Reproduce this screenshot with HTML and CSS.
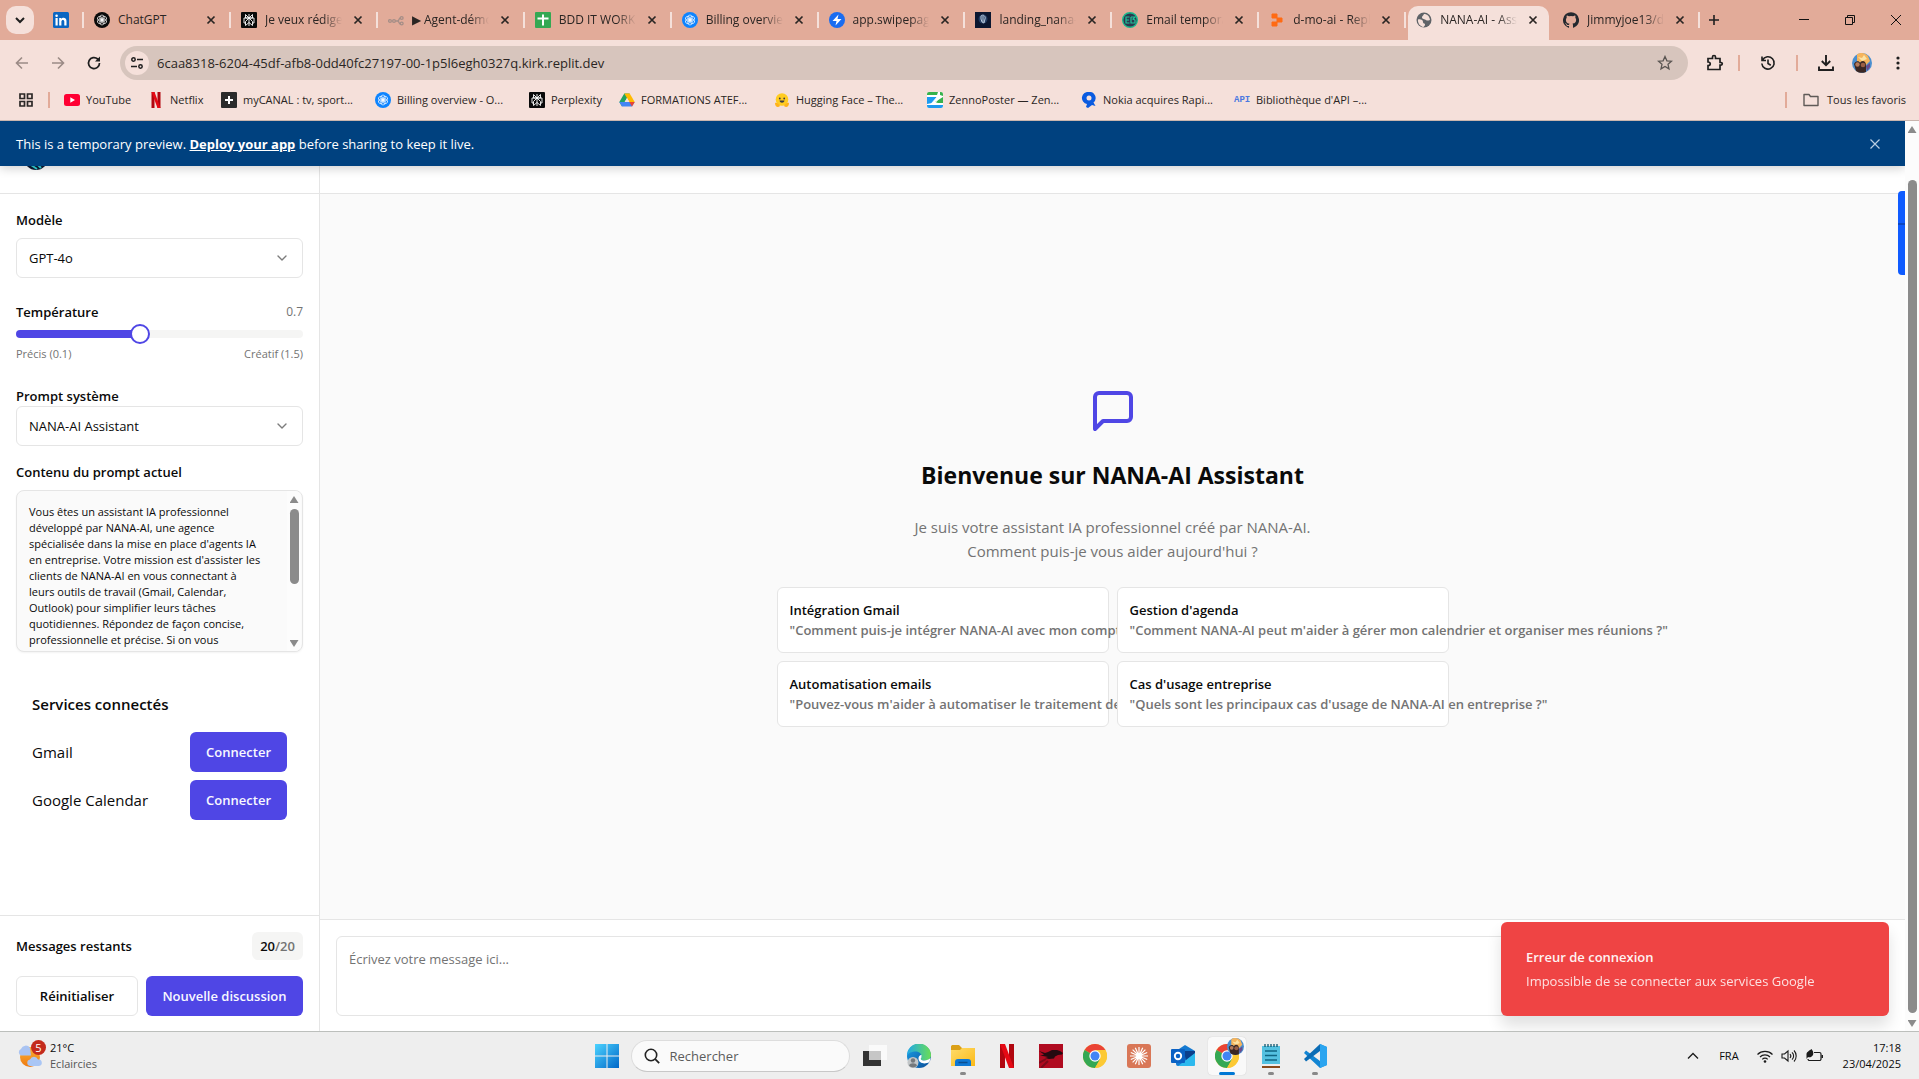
FILE: index.html
```html
<!DOCTYPE html>
<html lang="fr">
<head>
<meta charset="utf-8">
<title>NANA-AI - Assistant</title>
<link rel="stylesheet" href="styles.css">
</head>
<body>
<svg class="defs" aria-hidden="true">
  <defs>
    <symbol id="i-x" viewBox="0 0 16 16"><path d="M4.5 4.500l7 7M11.500 4.500l-7 7" fill="none" stroke="currentColor" stroke-width="1.700"/></symbol>
    <symbol id="i-openai" viewBox="0 0 16 16"><g fill="none" stroke="#fff" stroke-width=".7"><ellipse cx="8" cy="5.800" rx="2.200" ry="2.800"/><ellipse cx="8" cy="5.800" rx="2.200" ry="2.800" transform="rotate(60 8 8)"/><ellipse cx="8" cy="5.800" rx="2.200" ry="2.800" transform="rotate(120 8 8)"/><ellipse cx="8" cy="5.800" rx="2.200" ry="2.800" transform="rotate(180 8 8)"/><ellipse cx="8" cy="5.800" rx="2.200" ry="2.800" transform="rotate(240 8 8)"/><ellipse cx="8" cy="5.800" rx="2.200" ry="2.800" transform="rotate(300 8 8)"/></g></symbol>
    <symbol id="i-gpt" viewBox="0 0 16 16"><circle cx="8" cy="8" r="8" fill="#0a0a0a"/><use href="#i-openai"/></symbol>
    <symbol id="i-billing" viewBox="0 0 16 16"><circle cx="8" cy="8" r="8" fill="#0d84ff"/><use href="#i-openai"/></symbol>
    <symbol id="i-perp" viewBox="0 0 16 16"><rect width="16" height="16" rx="1" fill="#0a0a0a"/><path d="M8 2v12M4.500 2.500L8 6l3.500-3.500V6h-7zM3 6h10v5h-1.500M3 6v5h1.500M8 6l-3.500 3.500v4L8 10.500M8 6l3.500 3.500v4L8 10.500" fill="none" stroke="#fff" stroke-width=".9"/></symbol>
    <symbol id="i-chrome" viewBox="0 0 24 24"><circle cx="12" cy="12" r="12" fill="#fcc934"/><path d="M12 12L1.600 6A12 12 0 0 1 22.400 6z" fill="#ea4335"/><path d="M12 12L1.600 6A12 12 0 0 0 12 24l5.200-9z" fill="#34a853"/><path d="M12 6h10.400A12 12 0 0 1 12 24l5.200-9z" fill="#fcc934"/><circle cx="12" cy="12" r="5.700" fill="#fff"/><circle cx="12" cy="12" r="4.500" fill="#4285f4"/></symbol>
    <symbol id="i-avatar" viewBox="0 0 20 20"><circle cx="10" cy="10" r="10" fill="#4a8fd0"/><path d="M5 1.500c4-3 9-1 11 1.500l2 5-4 4-9-4z" fill="#f5b45c"/><path d="M6 4l4 1 2-3 3 4-5 2z" fill="#fbe3a5"/><path d="M2 11c1-3 5-4 6-1 1-3 6-3 6 2v7c-4 1.500-7 1-10-1z" fill="#3a2724"/><circle cx="5.500" cy="11.500" r="2.200" fill="#b37a5c"/><circle cx="11" cy="12" r="2.300" fill="#9a5f45"/><path d="M14 13l4-3v4l-3 4z" fill="#6a4a8a"/></symbol>
    <symbol id="i-chev" viewBox="0 0 16 16"><path d="M4 6l4 4 4-4" fill="none" stroke="currentColor" stroke-width="1.400" stroke-linecap="round" stroke-linejoin="round"/></symbol>
    <linearGradient id="g-win" x1="0" y1="0" x2="1" y2="1"><stop offset="0" stop-color="#4cd3ff"/><stop offset="1" stop-color="#0067c8"/></linearGradient>
    <linearGradient id="g-edge" x1="0" y1="0" x2="1" y2="0"><stop offset="0" stop-color="#1fa7e8"/><stop offset="1" stop-color="#6ade55"/></linearGradient>
    <linearGradient id="g-edge2" x1="0" y1="0" x2="1" y2="1"><stop offset="0" stop-color="#1aa0e8"/><stop offset="1" stop-color="#0a4d98"/></linearGradient>
    <linearGradient id="g-sun" x1="0" y1="0" x2="0" y2="1"><stop offset="0" stop-color="#fbb034"/><stop offset="1" stop-color="#ee7a12"/></linearGradient>
    <linearGradient id="g-folder" x1="0" y1="0" x2="1" y2="1"><stop offset="0" stop-color="#ffdc6b"/><stop offset="1" stop-color="#fbb917"/></linearGradient>
  </defs>
</svg>

<header class="browser">
  <div class="tabstrip">
    <button class="tab-search" aria-label="Rechercher dans les onglets"><svg width="16" height="16" viewBox="0 0 16 16"><path d="M4 6l4 4 4-4" fill="none" stroke="#1f1f1f" stroke-width="2"/></svg></button>
    <button class="tab pinned" aria-label="LinkedIn"><svg class="fav" viewBox="0 0 16 16"><rect width="16" height="16" rx="1.500" fill="#0a66c2"/><path d="M2.500 6h2.200v7.500H2.500zM6.200 6h2.100v1c1-1.700 5.200-1.800 5.200 2v4.500h-2.200V9.500c0-2.200-2.900-2-2.900 0v4H6.200z" fill="#fff"/><circle cx="3.600" cy="3.700" r="1.300" fill="#fff"/></svg></button>
    <nav class="tabs">
      <div class="tab"><svg class="fav"><use href="#i-gpt"/></svg><span class="tab-title">ChatGPT</span><button class="tab-close" aria-label="Fermer"><svg><use href="#i-x"/></svg></button></div>
      <div class="tab"><svg class="fav"><use href="#i-perp"/></svg><span class="tab-title">Je veux rédiger</span><button class="tab-close" aria-label="Fermer"><svg><use href="#i-x"/></svg></button></div>
      <div class="tab"><svg class="fav" viewBox="0 0 16 16"><g fill="none" stroke="#a58e87" stroke-width="1.300"><circle cx="2" cy="9" r="1.400"/><circle cx="6" cy="9" r="1.400"/><path d="M7.500 9h2c2 0 1-3 3-3M9.500 9c2 0 1 3 3 3"/><circle cx="13.700" cy="6" r="1.400"/><circle cx="13.700" cy="11.500" r="1.400"/></g></svg><span class="tab-title">▶ Agent-démo</span><button class="tab-close" aria-label="Fermer"><svg><use href="#i-x"/></svg></button></div>
      <div class="tab"><svg class="fav" viewBox="0 0 16 16"><rect width="16" height="16" rx="1" fill="#34a853"/><path d="M7 2.500h2v3h4.500v2H9v6H7v-6H2.500v-2H7z" fill="#fff"/></svg><span class="tab-title">BDD IT WORK</span><button class="tab-close" aria-label="Fermer"><svg><use href="#i-x"/></svg></button></div>
      <div class="tab"><svg class="fav"><use href="#i-billing"/></svg><span class="tab-title">Billing overview</span><button class="tab-close" aria-label="Fermer"><svg><use href="#i-x"/></svg></button></div>
      <div class="tab"><svg class="fav" viewBox="0 0 16 16"><circle cx="8" cy="8" r="8" fill="#1a6cf0"/><path d="M9.500 2.500L3.500 9H7.500L6.500 13.500 12.500 7H8.500z" fill="#fff"/></svg><span class="tab-title">app.swipepages</span><button class="tab-close" aria-label="Fermer"><svg><use href="#i-x"/></svg></button></div>
      <div class="tab"><svg class="fav" viewBox="0 0 16 16"><rect width="16" height="16" fill="#0b1630"/><circle cx="8" cy="7" r="4.500" fill="#253d63"/><path d="M6 4c2-2 5 0 4 3l-1 4-2-1-1-3zM8 4v6" fill="none" stroke="#b9cbdf" stroke-width="1"/></svg><span class="tab-title">landing_nana-ai</span><button class="tab-close" aria-label="Fermer"><svg><use href="#i-x"/></svg></button></div>
      <div class="tab"><svg class="fav" viewBox="0 0 16 16"><circle cx="8" cy="8" r="7.300" fill="#2b3950" stroke="#18b98c" stroke-width="1.400"/><path d="M7.500 5H4v6h3.500M4 8h3M9 5v6h4V8l-2-1 2-2H9" fill="none" stroke="#1fc79a" stroke-width="1.200"/></svg><span class="tab-title">Email temporaire</span><button class="tab-close" aria-label="Fermer"><svg><use href="#i-x"/></svg></button></div>
      <div class="tab"><svg class="fav" viewBox="0 0 16 16"><path d="M3 2h5v4H3zM8 6h5v4H8zM3 10h5v4H3z" fill="#ff6a13" stroke="#ff6a13" stroke-linejoin="round"/></svg><span class="tab-title">d-mo-ai - Replit</span><button class="tab-close" aria-label="Fermer"><svg><use href="#i-x"/></svg></button></div>
      <div class="tab active"><svg class="fav" viewBox="0 0 16 16"><circle cx="8" cy="8" r="7.500" fill="#5f6368"/><path d="M2 7.500c3-.5 5 .5 5 2.500s2 1 2 2.500-1 1.500-1.500 2.500C4 14.500 1.500 11 2 7.500zM8 2c-1 2-2 2-2 3.500S9 7 10 8s2 .5 4 0c-.5-4-3-6-6-6z" fill="#f5e0da"/></svg><span class="tab-title">NANA-AI - Assistant</span><button class="tab-close" aria-label="Fermer"><svg><use href="#i-x"/></svg></button></div>
      <div class="tab last"><svg class="fav" viewBox="0 0 16 16"><path d="M8 .2a8 8 0 0 0-2.530 15.590c.4.070.55-.17.550-.38v-1.490c-2.230.48-2.700-.94-2.700-.94-.36-.93-.89-1.170-.89-1.170-.73-.5.060-.49.060-.49.800.060 1.230.830 1.230.830.710 1.230 1.870.870 2.330.670.070-.520.280-.870.510-1.070-1.780-.2-3.640-.89-3.640-3.950 0-.87.310-1.590.820-2.150-.080-.2-.360-1.020.080-2.120 0 0 .670-.210 2.200.820a7.600 7.600 0 0 1 4 0c1.530-1.040 2.200-.820 2.200-.820.440 1.100.160 1.920.080 2.120.510.560.820 1.270.820 2.150 0 3.070-1.870 3.750-3.650 3.950.290.250.540.730.540 1.480v2.190c0 .210.150.460.550.380A8 8 0 0 0 8 .2z" fill="#24292f"/></svg><span class="tab-title">Jimmyjoe13/dmo</span><button class="tab-close" aria-label="Fermer"><svg><use href="#i-x"/></svg></button></div>
    </nav>
    <button class="new-tab" aria-label="Nouvel onglet"><svg width="16" height="16" viewBox="0 0 16 16"><path d="M8 3v10M3 8h10" stroke="#1f1f1f" stroke-width="1.600"/></svg></button>
    <div class="window-controls">
      <button aria-label="Réduire"><svg width="12" height="12" viewBox="0 0 12 12"><path d="M1 5.500h10" stroke="#111"/></svg></button>
      <button aria-label="Restaurer"><svg width="12" height="12" viewBox="0 0 12 12"><path d="M1.500 3.500h7v7h-7zM3.500 3V1.500h7v7H9" fill="none" stroke="#111"/></svg></button>
      <button aria-label="Fermer la fenêtre"><svg width="12" height="12" viewBox="0 0 12 12"><path d="M1 1l10 10M11 1L1 11" stroke="#111"/></svg></button>
    </div>
  </div>

  <div class="toolbar">
    <button class="tool" aria-label="Retour"><svg width="16" height="16" viewBox="0 0 16 16"><path d="M14 8H3M8 2.500L2.500 8 8 13.500" fill="none" stroke="#9b8b86" stroke-width="1.600"/></svg></button>
    <button class="tool" aria-label="Avancer"><svg width="16" height="16" viewBox="0 0 16 16"><path d="M2 8h11M8 2.500L13.500 8 8 13.500" fill="none" stroke="#9b8b86" stroke-width="1.600"/></svg></button>
    <button class="tool" aria-label="Actualiser"><svg width="16" height="16" viewBox="0 0 16 16"><path d="M13.500 8A5.500 5.500 0 1 1 11.700 4L13 5.200" fill="none" stroke="#1f1f1f" stroke-width="1.700"/><path d="M14 1.500V6.500H9z" fill="#1f1f1f"/></svg></button>
    <div class="omnibox">
      <button class="site-info" aria-label="Informations sur le site"><svg width="14" height="14" viewBox="0 0 14 14"><g fill="none" stroke="#1f1f1f" stroke-width="1.500"><circle cx="3.500" cy="3.500" r="1.700"/><path d="M7 3.500h6M1 10.500h6"/><circle cx="10.500" cy="10.500" r="1.700"/></g></svg></button>
      <input class="url" type="text" aria-label="Adresse" value="6caa8318-6204-45df-afb8-0dd40fc27197-00-1p5l6egh0327q.kirk.replit.dev">
      <button class="star" aria-label="Ajouter aux favoris"><svg width="16" height="16" viewBox="0 0 16 16"><path d="M8 1.500l1.900 4.300 4.600.4-3.500 3.100 1 4.600L8 11.500l-4 2.400 1-4.600L1.500 6.200l4.600-.4z" fill="none" stroke="#5a5552" stroke-width="1.300"/></svg></button>
    </div>
    <button class="tool ext" aria-label="Extensions"><svg width="18" height="18" viewBox="0 0 18 18"><path d="M2 4.500h4.500V3a1.500 1.500 0 0 1 3 0v1.500H14V8.500h1a1.300 1.300 0 0 1 0 2.600h-1V15.500H2v-4c3 0 3-3.500 0-3.500z" fill="none" stroke="#1f1f1f" stroke-width="1.700"/></svg></button>
    <span class="sep"></span>
    <button class="tool" aria-label="Historique"><svg width="16" height="16" viewBox="0 0 16 16"><path d="M2.500 5A6.200 6.200 0 1 1 1.800 8.500M2 1.500V5.500H6M8 4.500V8.500l2.800 1.700" fill="none" stroke="#1f1f1f" stroke-width="1.600"/></svg></button>
    <span class="sep"></span>
    <button class="tool" aria-label="Téléchargements"><svg width="18" height="18" viewBox="0 0 18 18"><path d="M9 1v10M4.800 7L9 11.200 13.200 7M2 12.500V16h14v-3.500" fill="none" stroke="#1f1f1f" stroke-width="1.900"/></svg></button>
    <button class="tool" aria-label="Profil"><svg width="20" height="20"><use href="#i-avatar"/></svg></button>
    <button class="tool" aria-label="Menu"><svg width="16" height="16" viewBox="0 0 16 16"><g fill="#1f1f1f"><circle cx="8" cy="3" r="1.600"/><circle cx="8" cy="8" r="1.600"/><circle cx="8" cy="13" r="1.600"/></g></svg></button>
  </div>

  <div class="bookmarks">
    <button class="apps" aria-label="Applications"><svg width="16" height="16" viewBox="0 0 16 16"><path d="M2 2h4.500v4.500H2zM9.500 2H14v4.500H9.500zM2 9.500h4.500V14H2zM9.500 9.500H14V14H9.500z" fill="none" stroke="#2b2726" stroke-width="1.700"/></svg></button>
    <span class="sep"></span>
    <nav class="bookmark-list">
      <a href="#"><svg class="fav" viewBox="0 0 16 16"><rect y="2" width="16" height="12" rx="2.500" fill="#ff0033"/><path d="M6.300 5.300L11 8l-4.700 2.700z" fill="#fff"/></svg>YouTube</a>
      <a href="#"><svg class="fav" viewBox="0 0 16 16"><path d="M3.500 0h3v16h-3zM9.500 0h3v16h-3z" fill="#b1060f"/><path d="M3.500 0h3l6 16h-3z" fill="#e50914"/></svg>Netflix</a>
      <a href="#"><svg class="fav" viewBox="0 0 16 16"><rect width="16" height="16" rx="1" fill="#2b2b2b"/><path d="M7 4h2v3h3v2H9v3H7V9H4V7h3z" fill="#fff"/></svg>myCANAL : tv, sport...</a>
      <a href="#"><svg class="fav"><use href="#i-billing"/></svg>Billing overview - O...</a>
      <a href="#"><svg class="fav"><use href="#i-perp"/></svg>Perplexity</a>
      <a href="#"><svg class="fav" viewBox="0 0 16 16"><path d="M5.300 1.500h5.400L8 6 3 14.500.3 10z" fill="#1ea362"/><path d="M5.300 1.500h5.400L15.700 10h-5.400z" fill="#ffba00"/><path d="M.3 10h15.400L13 14.500H3z" fill="#4285f4"/><path d="M15.700 10L13 14.500 10.300 10z" fill="#ea4335"/><path d="M8 6l2.300 4H5.700z" fill="#f5e0da"/></svg>FORMATIONS ATEF...</a>
      <a href="#"><svg class="fav" viewBox="0 0 16 16"><circle cx="8" cy="7.500" r="6.300" fill="#ffcc22"/><path d="M1 11c2-1 4 1 5 3-2 2-5 1-5-3zM15 11c-2-1-4 1-5 3 2 2 5 1 5-3z" fill="#ffb31a"/><circle cx="5.800" cy="6.500" r=".9" fill="#3a3b45"/><circle cx="10.200" cy="6.500" r=".9" fill="#3a3b45"/><path d="M5.500 8.500h5c-.5 3-4.500 3-5 0z" fill="#3a3b45"/></svg>Hugging Face – The...</a>
      <a href="#"><svg class="fav" viewBox="0 0 16 16"><rect width="16" height="16" rx="2" fill="#fff"/><path d="M2 0h9l-1 3H0V2a2 2 0 0 1 2-2zM13 0h1a2 2 0 0 1 2 2v2l-3-1zM16 5v6h-5L8 10z" fill="#37b24d"/><path d="M0 5h10L5 11l-5 1zM0 13h16v1a2 2 0 0 1-2 2H2a2 2 0 0 1-2-2z" fill="#1c9bf0"/><path d="M11 4L4 12M13 5l-6 7" stroke="#fff"/></svg>ZennoPoster — Zen...</a>
      <a href="#"><svg class="fav" viewBox="0 0 16 16"><path d="M8 0a6 6 0 0 1 4.500 10.500L14.500 14 11 13 7 16 5 15 6 12A6 6 0 0 1 8 0z" fill="#0a5be0"/><circle cx="8" cy="6" r="2.500" fill="#f5e0da"/></svg>Nokia acquires Rapi...</a>
      <a href="#"><span class="fav api">API</span>Bibliothèque d'API –...</a>
    </nav>
    <span class="sep"></span>
    <button class="all-bookmarks"><svg width="16" height="16" viewBox="0 0 16 16"><path d="M1 2.500h5l1.500 2H15v9H1z" fill="none" stroke="#5f5a57" stroke-width="1.400" stroke-linejoin="round"/></svg>Tous les favoris</button>
  </div>
</header>

<div class="viewport">
  <div class="app">
    <div class="banner">
      <p>This is a temporary preview. <a href="#">Deploy your app</a> before sharing to keep it live.</p>
      <button aria-label="Close"><svg width="12" height="12" viewBox="0 0 12 12"><path d="M1.500 1.500l9 9M10.500 1.500l-9 9" stroke="#b9cde2" stroke-width="1.200"/></svg></button>
    </div>

    <aside class="sidebar">
      <div class="brand"><svg width="24" height="24" viewBox="0 0 24 24"><circle cx="12" cy="12" r="12" fill="#0c1a33"/><path d="M7 19l6 4M13 18l4 4" stroke="#2fd3d8" stroke-width="2"/></svg></div>

      <div class="settings">
        <div class="field">
          <label for="model">Modèle</label>
          <div class="select"><select id="model"><option>GPT-4o</option></select><svg><use href="#i-chev"/></svg></div>
        </div>

        <div class="field temperature">
          <div class="row"><label for="temp">Température</label><output for="temp">0.7</output></div>
          <input id="temp" type="range" min="0.1" max="1.5" step="0.1" value="0.7">
          <div class="row hint"><span>Précis (0.1)</span><span>Créatif (1.5)</span></div>
        </div>

        <div class="field tight">
          <label for="prompt">Prompt système</label>
          <div class="select"><select id="prompt"><option>NANA-AI Assistant</option></select><svg><use href="#i-chev"/></svg></div>
        </div>

        <div class="field">
          <label for="content">Contenu du prompt actuel</label>
          <div class="prompt-box">
            <textarea id="content" readonly>Vous êtes un assistant IA professionnel développé par NANA-AI, une agence spécialisée dans la mise en place d'agents IA en entreprise. Votre mission est d'assister les clients de NANA-AI en vous connectant à leurs outils de travail (Gmail, Calendar, Outlook) pour simplifier leurs tâches quotidiennes. Répondez de façon concise, professionnelle et précise. Si on vous</textarea>
            <div class="scrollbar"><i class="up"></i><i class="thumb"></i><i class="down"></i></div>
          </div>
        </div>
      </div>

      <section class="services">
        <h3>Services connectés</h3>
        <div class="row"><span>Gmail</span><button class="btn primary">Connecter</button></div>
        <div class="row"><span>Google Calendar</span><button class="btn primary">Connecter</button></div>
      </section>

      <footer class="quota">
        <div class="row"><strong>Messages restants</strong><span class="pill"><b>20</b>/20</span></div>
        <div class="actions"><button class="btn outline">Réinitialiser</button><button class="btn primary wide">Nouvelle discussion</button></div>
      </footer>
    </aside>

    <main class="chat">
      <div class="chat-head"></div>
      <div class="welcome">
        <svg width="48" height="48" viewBox="0 0 24 24" fill="none" stroke="#4f46e5" stroke-width="2" stroke-linecap="round" stroke-linejoin="round"><path d="M21 15a2 2 0 0 1-2 2H7l-4 4V5a2 2 0 0 1 2-2h14a2 2 0 0 1 2 2z"/></svg>
        <h1>Bienvenue sur NANA-AI Assistant</h1>
        <p>Je suis votre assistant IA professionnel créé par NANA-AI.<br>Comment puis-je vous aider aujourd'hui ?</p>
        <div class="cards">
          <button class="card"><span>Intégration Gmail</span><span class="desc">"Comment puis-je intégrer NANA-AI avec mon compte Gmail ?"</span></button>
          <button class="card"><span>Gestion d'agenda</span><span class="desc">"Comment NANA-AI peut m'aider à gérer mon calendrier et organiser mes réunions ?"</span></button>
          <button class="card"><span>Automatisation emails</span><span class="desc">"Pouvez-vous m'aider à automatiser le traitement de mes emails ?"</span></button>
          <button class="card"><span>Cas d'usage entreprise</span><span class="desc">"Quels sont les principaux cas d'usage de NANA-AI en entreprise ?"</span></button>
        </div>
      </div>
      <form class="composer"><textarea aria-label="Message" placeholder="Écrivez votre message ici..."></textarea></form>
    </main>

    <div class="side-widget"></div>
    <div class="toast" role="alert"><strong>Erreur de connexion</strong><span>Impossible de se connecter aux services Google</span></div>
  </div>
  <div class="scrollbar page-scroll"><i class="up"></i><i class="thumb"></i><i class="down"></i></div>
</div>

<footer class="taskbar">
  <button class="weather">
    <svg width="28" height="28" viewBox="0 0 28 28"><circle cx="13" cy="15" r="10" fill="url(#g-sun)"/><path d="M4 13.500a3.500 3.500 0 0 1 0-6.500 5 5 0 0 1 9-1l1 7.500z" fill="#a9c3f2"/><path d="M13 24a3.300 3.300 0 0 1 0-6.500 4.300 4.300 0 0 1 8 0 3.200 3.200 0 0 1 1 6.500z" fill="#a9c6f5"/></svg>
    <span class="count">5</span>
    <span class="lines"><span>21°C</span><span class="dim">Eclaircies</span></span>
  </button>
  <div class="task-center">
    <button class="start" aria-label="Démarrer"><svg width="24" height="24" viewBox="0 0 24 24"><path d="M0 0h11.500v11.500H0zM12.500 0H24v11.500H12.500zM0 12.500h11.500V24H0zM12.500 12.500H24V24H12.500z" fill="url(#g-win)"/></svg></button>
    <label class="search"><svg width="16" height="16" viewBox="0 0 16 16"><circle cx="7" cy="7" r="5.700" fill="none" stroke="#222" stroke-width="1.600"/><path d="M11.200 11.200l4 4" stroke="#222" stroke-width="1.800"/></svg><input type="search" placeholder="Rechercher" aria-label="Rechercher"></label>
    <button class="task" aria-label="Vue des tâches"><svg viewBox="0 0 24 24"><path d="M0 7h18v15H0z" fill="#333"/><path d="M6 1h18v15H6z" fill="#fafafa"/><path d="M6 7h12v9H6z" fill="#c6c6c6"/></svg></button>
    <button class="task" aria-label="Edge"><svg viewBox="0 0 24 24"><circle cx="12" cy="12" r="12" fill="url(#g-edge2)"/><path d="M0 12A12 12 0 0 1 24 11c0 4-3 5.500-6.500 5.500-3.500 0-4.500-1.500-3-3C15 9 11 7 7.500 7.500 3 8 1 10 0 12z" fill="url(#g-edge)"/><path d="M14.500 13.500c-1.500 1.500-.5 3 3 3 2 0 4.500-1 6-2.500l-1 4c-5 3-11 1-11-3.500 0-2.500 2-4 3-3.500z" fill="#fff"/><circle cx="6" cy="18.500" r="5.500" fill="#c2c6c8"/><circle cx="6" cy="16.500" r="2.200" fill="#75797c"/><path d="M2 21.500c1-3 7-3 8 0-2 2.500-6 2.500-8 0z" fill="#75797c"/></svg></button>
    <button class="task running" aria-label="Explorateur"><svg viewBox="0 0 24 24"><path d="M0 2.500C0 1.500 1 1 2 1h6l3 3h13v18H0z" fill="#dba017"/><path d="M0 6h9l2-2h13v18H0z" fill="url(#g-folder)"/><path d="M4 22v-4c0-2 1-3 3-3h10c2 0 3 1 3 3v4z" fill="#0f78d4"/><path d="M7.500 18.500h9" stroke="#0a4f91" stroke-width="1.500"/></svg></button>
    <button class="task" aria-label="Netflix"><svg viewBox="0 0 24 24"><path d="M5 0h5v24H5zM14 0h5v24h-5z" fill="#b1060f"/><path d="M5 0h5l9 24h-5z" fill="#e50914"/></svg></button>
    <button class="task" aria-label="Dragon"><svg viewBox="0 0 24 24"><path d="M0 0h24v24H0z" fill="#b00b20"/><path d="M0 7l6 2 3-1 4-2 5 0 3 1 3 2-1 1.500-4 .5-3 1.500-1 2-5 .5-4-1 3-1-5-1-3 0 4-1.500z" fill="#240a10"/><path d="M0 19l7-4M2 24l7-7" stroke="#7a0c1a" stroke-width="2"/></svg></button>
    <button class="task" aria-label="Chrome"><svg><use href="#i-chrome"/></svg></button>
    <button class="task" aria-label="Claude"><svg viewBox="0 0 24 24"><rect width="24" height="24" rx="3" fill="#d97757"/><path d="M12 3v18M3 12h18M5.600 5.600l12.800 12.800M18.400 5.600L5.600 18.400M8.300 3.800l7.400 16.400M15.700 3.800L8.300 20.200M3.800 8.500l16.400 7M20.200 8.500l-16.400 7" stroke="#fff" stroke-width="1.200"/></svg></button>
    <button class="task" aria-label="Outlook"><svg viewBox="0 0 24 24"><path d="M5 7l9-6 10 6v13a2 2 0 0 1-2 2H7a2 2 0 0 1-2-2z" fill="#1479d1"/><path d="M13 7h11v3l-9 7z" fill="#0b3f8c"/><path d="M24 9v12l-1 1H7l8-6z" fill="#2cb9ee"/><rect y="5" width="14" height="14" rx="1" fill="#0b62c4"/><circle cx="7" cy="12" r="3.200" fill="none" stroke="#fff" stroke-width="1.900"/></svg></button>
    <button class="task current" aria-label="Chrome profil"><svg viewBox="0 0 24 24"><use href="#i-chrome"/></svg><svg class="badge"><use href="#i-avatar"/></svg></button>
    <button class="task running" aria-label="Bloc-notes"><svg viewBox="0 0 24 24"><path d="M3 2h18v20H3z" fill="#54c1e0"/><path d="M3 21.500h18V24H3z" fill="#8a4a1c"/><path d="M3 20h18v2H3z" fill="#eee"/><path d="M6 7h12M6 11.500h12M6 16h12" stroke="#0f6683" stroke-width="1.500"/><path d="M6 0v3M9 0v3M12 0v3M15 0v3M18 0v3" stroke="#10566e" stroke-width="1.300"/></svg></button>
    <button class="task running" aria-label="VS Code"><svg viewBox="0 0 24 24"><path d="M17 0l7 3v18l-7 3L1 9l2-2.500L17 17z" fill="#1285d3"/><path d="M17 0L1 15l2 2.500L17 7z" fill="#0a6cb5"/><path d="M17 0l7 3v18l-7 3z" fill="#2ba5f0"/></svg></button>
  </div>
  <div class="tray">
    <button aria-label="Icônes masquées"><svg width="14" height="14" viewBox="0 0 14 14"><path d="M2 9.500l5-5 5 5" fill="none" stroke="#1b1b1b" stroke-width="1.300"/></svg></button>
    <span class="lang">FRA</span>
    <button class="status" aria-label="Réseau, son, batterie">
      <svg width="16" height="16" viewBox="0 0 16 16"><path d="M.5 6.500a10.500 10.500 0 0 1 15 0M3 9a7 7 0 0 1 10 0M5.300 11.300a3.800 3.800 0 0 1 5.400 0" fill="none" stroke="#1b1b1b" stroke-width="1.200"/><circle cx="8" cy="13.500" r="1.300" fill="#1b1b1b"/></svg>
      <svg width="17" height="16" viewBox="0 0 17 16"><path d="M1 6h2.500L7 3v10L3.500 10H1zM9 6a3 3 0 0 1 0 4M11 4.300a5 5 0 0 1 0 7.400M13 2.500a8 8 0 0 1 0 11" fill="none" stroke="#1b1b1b" stroke-width="1.100"/></svg>
      <svg width="17" height="16" viewBox="0 0 17 16"><path d="M8 4.500h5.500a1.500 1.500 0 0 1 1.500 1.500v5a1.500 1.500 0 0 1-1.500 1.500h-10A1.500 1.500 0 0 1 2 11" fill="none" stroke="#1b1b1b" stroke-width="1.200"/><path d="M15.500 7H17v3h-1.500z" fill="#1b1b1b"/><path d="M.5 7C0 4 3 3 5.500 1 8 4 8 7.500 5 9 3.500 9.800 2 9 2 9l-1.500 2z" fill="#1b1b1b"/></svg>
    </button>
    <time class="lines"><span>17:18</span><span>23/04/2025</span></time>
  </div>
</footer>
</body>
</html>
```
FILE: styles.css
```css
* { box-sizing: border-box; }

:root {
  --strip: #e2ab99;
  --chrome: #f5e0da;
  --border: #e5e5e5;
  --muted: #737373;
  --primary: #4f46e5;
}

body {
  margin: 0;
  height: 100vh;
  display: flex;
  flex-direction: column;
  overflow: hidden;
  font-family: "Open Sans", "Noto Sans", sans-serif;
  font-size: 13px;
  line-height: 20px;
  color: #0a0a0a;
}

button, input, select, textarea { font: inherit; color: inherit; }
button { border: 0; padding: 0; background: none; display: flex; align-items: center; justify-content: center; flex: none; }
svg { display: block; flex: none; }
p, h1, h3 { margin: 0; }
.defs { position: absolute; width: 0; height: 0; }
.fav { width: 16px; height: 16px; flex: none; }

/* Browser window */
.browser { flex: none; background: var(--chrome); border-bottom: 1px solid #c9b5ae; font-size: 11px; color: #2a2523; }

.tabstrip { display: flex; height: 40px; background: var(--strip); padding-left: 6px; position: relative; }
.tab-search { width: 28px; height: 28px; margin-top: 6px; border-radius: 10px; background: var(--chrome); }
.tabs { display: flex; flex: 0 1 1616px; min-width: 0; }
.tab { position: relative; display: flex; align-items: center; flex: 1 1 0; min-width: 0; padding: 0 12px 0 10px; }
.tab::after { content: ""; position: absolute; right: 0; top: 12px; width: 2px; height: 16px; background: var(--chrome); }
.tab.pinned { flex: none; width: 50px; padding: 0 0 0 4px; }
.tab-title { flex: 1; min-width: 0; margin: 0 8px; overflow: hidden; white-space: nowrap; font-size: 12px; mask-image: linear-gradient(90deg, #000 75%, transparent); }
.tab:first-child .tab-title { mask-image: none; }
.tab-close svg { width: 16px; height: 16px; }
.tab.active::after { display: none; }
.tab.active::before { content: ""; position: absolute; z-index: 0; inset: 6px 4px 0 2px; border-radius: 10px 10px 0 0; background: var(--chrome); }
.tab.active > * { position: relative; }
.new-tab { width: 28px; }
.window-controls { display: flex; margin-left: auto; }
.window-controls button { width: 46px; }

.toolbar { display: flex; align-items: center; height: 46px; padding: 0 3px 0 4px; background: var(--chrome); }
.tool { width: 36px; height: 36px; }
.omnibox { display: flex; align-items: center; flex: 1; height: 34px; margin: 0 9px 0 8px; padding: 0 15px 0 5px; border-radius: 17px; background: #d7c5bd; }
.site-info { width: 24px; height: 24px; border-radius: 12px; background: var(--chrome); }
.url { flex: 1; min-width: 0; border: 0; background: none; padding: 0 8px; font-size: 13px; color: #2a2523; }
.sep { flex: none; width: 2px; height: 16px; background: var(--strip); }
.ext { margin-right: 5px; }
.toolbar .sep + .tool { margin: 0 10px; }
.toolbar .sep + .tool + .tool { margin: 0; }
.toolbar .sep:last-of-type + .tool { margin-right: 0; }

.bookmarks { display: flex; align-items: center; height: 34px; padding: 0 13px 6px 18px; }
.apps { width: 16px; margin-right: 14px; }
.bookmark-list { flex: 1; min-width: 0; display: grid; grid-template-columns: 84px 73px 154px 154px 90px 155px 153px 154px 153px 140px; margin-left: 14px; overflow: hidden; }
.bookmark-list a { display: flex; align-items: center; gap: 6px; color: inherit; text-decoration: none; white-space: nowrap; }
.api { font: bold 9px/16px "Liberation Mono", monospace; color: #4a78e0; }
.all-bookmarks { gap: 8px; margin-left: 16px; }

/* Page */
.viewport { flex: 1; min-height: 0; display: flex; }
.app { position: relative; flex: 1; min-width: 0; display: flex; overflow: hidden; background: #fff; }
.banner { position: absolute; z-index: 3; top: 0; left: 0; right: 0; height: 45px; display: flex; align-items: center; justify-content: space-between; padding: 0 24px 0 16px; background: #00417f; color: #fff; box-shadow: 0 2px 10px rgba(0, 0, 0, .2); }
.banner a { color: inherit; font-weight: 700; }

.scrollbar { position: relative; flex: none; width: 14px; display: flex; flex-direction: column; align-items: center; background: #fcfcfc; }
.scrollbar i { background: #8b8b8b; }
.up, .down { width: 9px; height: 7px; }
.up { clip-path: polygon(50% 0, 100% 100%, 0 100%); }
.down { clip-path: polygon(0 0, 100% 0, 50% 100%); }
.scrollbar .thumb { width: 9px; border-radius: 5px; flex: 1; }
.page-scroll { padding: 5px 0 4px; gap: 7px; }
.page-scroll .thumb { margin-top: 40px; }

.sidebar { flex: none; width: 320px; display: flex; flex-direction: column; border-right: 1px solid var(--border); }
.brand { flex: none; height: 73px; padding: 25px 0 0 24px; border-bottom: 1px solid var(--border); }
.row { display: flex; align-items: center; justify-content: space-between; }
.settings { display: flex; flex-direction: column; gap: 24px; padding: 16px 16px 0; }
.field { display: flex; flex-direction: column; gap: 8px; }
label, .row strong { font-weight: 600; }
.field.tight { gap: 0; margin-bottom: -8px; }
.temperature .row { line-height: 20px; }
.temperature output { color: var(--muted); font-size: 12px; }
.temperature .hint { font-size: 11px; color: var(--muted); line-height: 16px; }
.select { position: relative; }
.select select { width: 100%; height: 40px; padding: 0 12px; border: 1px solid var(--border); border-radius: 6px; background: #fff; appearance: none; }
.select svg { position: absolute; right: 13px; top: 12px; width: 16px; height: 16px; color: #7c7c7c; pointer-events: none; }

input[type="range"] { appearance: none; width: 100%; height: 8px; margin: 0; border-radius: 4px; background: linear-gradient(90deg, var(--primary) 43%, #f5f5f4 43%); }
input[type="range"]::-webkit-slider-thumb { appearance: none; width: 20px; height: 20px; border: 2px solid var(--primary); border-radius: 10px; background: #fff; }

.prompt-box { display: flex; height: 162px; border: 1px solid var(--border); border-radius: 8px; background: #fafafa; overflow: hidden; box-shadow: 0 1px 2px rgba(0, 0, 0, .05); }
.prompt-box textarea { flex: 1; min-width: 0; border: 0; background: none; padding: 13px 24px 0 12px; resize: none; overflow: hidden; font-size: 11px; line-height: 16px; outline: 0; }
.prompt-box .scrollbar { padding: 5px 0 4px; gap: 6px; margin-right: 1px; }
.prompt-box .thumb { flex: none; height: 75px; }
.prompt-box .down { margin-top: auto; }

.services { display: flex; flex-direction: column; gap: 8px; padding: 40px 32px 0; font-size: 15px; }
.services h3 { font-size: 15px; font-weight: 600; line-height: 24px; margin-bottom: 8px; }

.btn { height: 40px; padding: 0 16px; border-radius: 6px; font-size: 13px; font-weight: 600; }
.primary { background: var(--primary); color: #f8f8ff; }
.outline { background: #fff; border: 1px solid var(--border); }

.quota { margin-top: auto; padding: 16px 16px 15px; border-top: 1px solid var(--border); }
.pill { padding: 4px 8px; border-radius: 6px; background: #f5f5f4; color: var(--muted); font-weight: 600; }
.pill b { color: #0a0a0a; font-weight: 600; }
.actions { display: flex; gap: 8px; margin-top: 16px; }
.actions .btn { flex: 120 1 0; padding: 0; }
.actions .wide { flex: 157 1 0; }

.chat { flex: 1; min-width: 0; display: flex; flex-direction: column; background: #fafafa; }
.chat-head { flex: none; height: 73px; background: #fff; border-bottom: 1px solid var(--border); }
.welcome { flex: 1; display: flex; flex-direction: column; align-items: center; justify-content: center; text-align: center; padding: 0 16px; }
.welcome h1 { margin-top: 24px; font-size: 23px; line-height: 32px; font-weight: 700; }
.welcome p { margin: 24px 0; font-size: 15px; line-height: 24px; color: var(--muted); }
.cards { display: grid; grid-template-columns: 1fr 1fr; gap: 8px; width: 100%; max-width: 672px; }
.card { min-width: 0; height: 66px; flex-direction: column; align-items: flex-start; padding: 0 12px; background: #fff; border: 1px solid var(--border); border-radius: 6px; font-weight: 600; white-space: nowrap; }
.desc { color: var(--muted); }
.composer { flex: none; padding: 16px 16px 15px; background: #fff; border-top: 1px solid var(--border); }
.composer textarea { display: block; width: 100%; height: 80px; padding: 12px; border: 1px solid var(--border); border-radius: 6px; resize: none; }
.composer textarea::placeholder { color: var(--muted); }

.side-widget { position: absolute; right: 0; top: 70px; width: 7px; height: 84px; border-radius: 4px 0 0 4px; background: linear-gradient(#0f5bff 32px, #0b46c4 32px, #0b46c4 34px, #0f5bff 34px); }
.toast { position: absolute; right: 16px; bottom: 15px; width: 388px; height: 94px; display: flex; flex-direction: column; justify-content: center; gap: 4px; padding: 0 25px; border-radius: 6px; background: #ef4444; color: #fef2f2; box-shadow: 0 10px 15px rgba(0, 0, 0, .12); }
.toast strong { font-weight: 600; }
.toast span { opacity: .9; }

/* Taskbar */
.taskbar { flex: none; height: 48px; display: grid; grid-template-columns: 1fr auto 1fr; align-items: center; border-top: 1px solid #bcbfbc; background: #eee; font-size: 11px; line-height: 16px; }
.weather { position: relative; justify-self: start; gap: 5px; padding-left: 17px; }
.count { position: absolute; left: 31px; top: 0; width: 15px; height: 15px; border-radius: 8px; background: #c42b1c; color: #fff; line-height: 15px; text-align: center; }
.lines { display: flex; flex-direction: column; text-align: left; }
.dim { color: #555; }
.task-center { display: flex; align-items: center; padding-left: 12px; }
.start { margin-right: 12px; }
.search { display: flex; align-items: center; gap: 10px; width: 219px; height: 32px; padding: 0 12px; margin-right: 3px; border: 1px solid #ddd; border-bottom-color: #c8c8c8; border-radius: 16px; background: #fafafa; }
.search input { flex: 1; min-width: 0; border: 0; padding: 0; background: none; font-size: 13px; font-weight: 400; }
.search input::placeholder { color: #5c5c5c; }
.task { position: relative; width: 38px; height: 38px; margin: 0 3px; border-radius: 4px; }
.task svg { width: 24px; height: 24px; }
.task.current { background: #f9f9f9; box-shadow: 0 0 1px #bbb; }
.task .badge { position: absolute; right: 2px; top: 1px; width: 17px; height: 17px; }
.task.running::after, .task.current::after { content: ""; position: absolute; bottom: 0; width: 6px; height: 3px; border-radius: 2px; background: #888; }
.task.current::after { width: 16px; background: #0078d4; }
.tray { justify-self: end; display: flex; align-items: center; padding-right: 18px; }
.lang { margin: 0 18px 0 19px; }
.status { gap: 8px; margin-right: 20px; }
.tray .lines { text-align: right; }
```
